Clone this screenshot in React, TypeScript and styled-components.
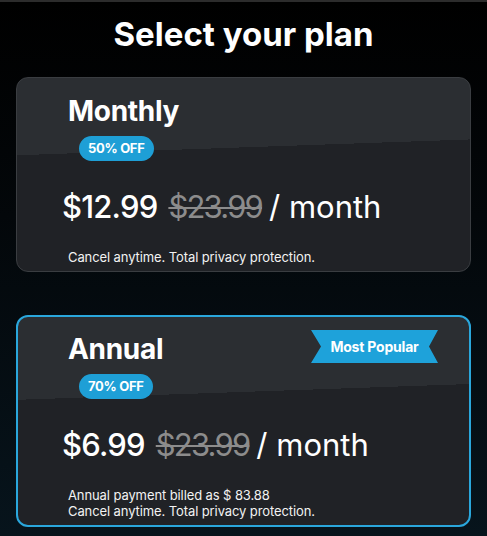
import React from 'react';
import styled, { createGlobalStyle } from 'styled-components';

const GlobalStyle = createGlobalStyle`
    html, body {
        margin: 0;
        padding: 0;
    }
    body {
        font-family: Inter, "Noto Sans", sans-serif;
        background: #000;
    }
`;

const Page = styled.div`
    box-sizing: border-box;
    width: 487px;
    height: 536px;
    border-top: 2px solid #2c2c2c;
    background: linear-gradient(180deg, #000 0%, #03070a 40%, #07141c 100%);
    padding: 11px 16px 0 16px;
    display: flex;
    flex-direction: column;
    overflow: hidden;
`;

const Heading = styled.h1`
    margin: 0;
    text-align: center;
    color: #fff;
    font-size: 33px;
    font-weight: 700;
    line-height: 42px;
    letter-spacing: 0;
`;

const Plans = styled.div`
    display: flex;
    flex-direction: column;
    gap: 43px;
    margin-top: 22px;
`;

const Card = styled.div<{ $selected?: boolean; $height: number }>`
    position: relative;
    box-sizing: border-box;
    height: ${(p) => p.$height}px;
    border-radius: 12px;
    border: ${(p) => (p.$selected ? '2px solid #2aa7dc' : '1px solid #3a3d41')};
    background: linear-gradient(178deg, #2b2e32 0 37%, #202226 37% 100%);
    padding: ${(p) => (p.$selected ? '14px 0 0 50px' : '15px 0 0 51px')};
    display: flex;
    flex-direction: column;
    align-items: flex-start;
`;

const PlanName = styled.div`
    color: #fff;
    font-size: 28px;
    font-weight: 700;
    line-height: 36px;
    letter-spacing: -0.3px;
`;

const Discount = styled.span`
    margin: 7px 0 0 11px;
    background: #1e9fd6;
    color: #fff;
    font-size: 13px;
    font-weight: 700;
    line-height: 25px;
    padding: 0 9px;
    border-radius: 13px;
    letter-spacing: -0.3px;
`;

const PriceRow = styled.div`
    margin: 26px 0 0 -6px;
    display: flex;
    align-items: baseline;
    gap: 11px;
    color: #fff;
    font-size: 31px;
    line-height: 40px;
`;

const Price = styled.span`
    font-weight: 500;
    letter-spacing: -0.8px;
`;

const OldPrice = styled.span`
    color: #8c8c8c;
    text-decoration: line-through;
    text-decoration-thickness: 2px;
    margin-right: -4px;
    letter-spacing: -1.8px;
`;

const Per = styled.span`
    font-weight: 400;
`;

const Note = styled.div`
    margin-top: 22px;
    color: #f2f2f2;
    font-size: 13px;
    line-height: 16px;
    letter-spacing: -0.1px;
`;

const Ribbon = styled.div`
    position: absolute;
    top: 13px;
    right: 31px;
    width: 127px;
    height: 33px;
    background: #1ea2da;
    clip-path: polygon(0 0, 100% 0, calc(100% - 9px) 50%, 100% 100%, 0 100%, 10px 50%);
    color: #fff;
    font-size: 14px;
    font-weight: 700;
    display: flex;
    align-items: center;
    justify-content: center;
    letter-spacing: -0.2px;
`;

export default function App() {
    return (
        <>
            <GlobalStyle />
            <Page>
                <Heading>Select your plan</Heading>
                <Plans>
                    <Card $height={195}>
                        <PlanName>Monthly</PlanName>
                        <Discount>50% OFF</Discount>
                        <PriceRow>
                            <Price>$12.99</Price>
                            <OldPrice>$23.99</OldPrice>
                            <Per>/ month</Per>
                        </PriceRow>
                        <Note>Cancel anytime. Total privacy protection.</Note>
                    </Card>
                    <Card $selected $height={212}>
                        <Ribbon>Most Popular</Ribbon>
                        <PlanName>Annual</PlanName>
                        <Discount>70% OFF</Discount>
                        <PriceRow>
                            <Price>$6.99</Price>
                            <OldPrice>$23.99</OldPrice>
                            <Per>/ month</Per>
                        </PriceRow>
                        <Note>
                            Annual payment billed as $ 83.88
                            <br />
                            Cancel anytime. Total privacy protection.
                        </Note>
                    </Card>
                </Plans>
            </Page>
        </>
    );
}
